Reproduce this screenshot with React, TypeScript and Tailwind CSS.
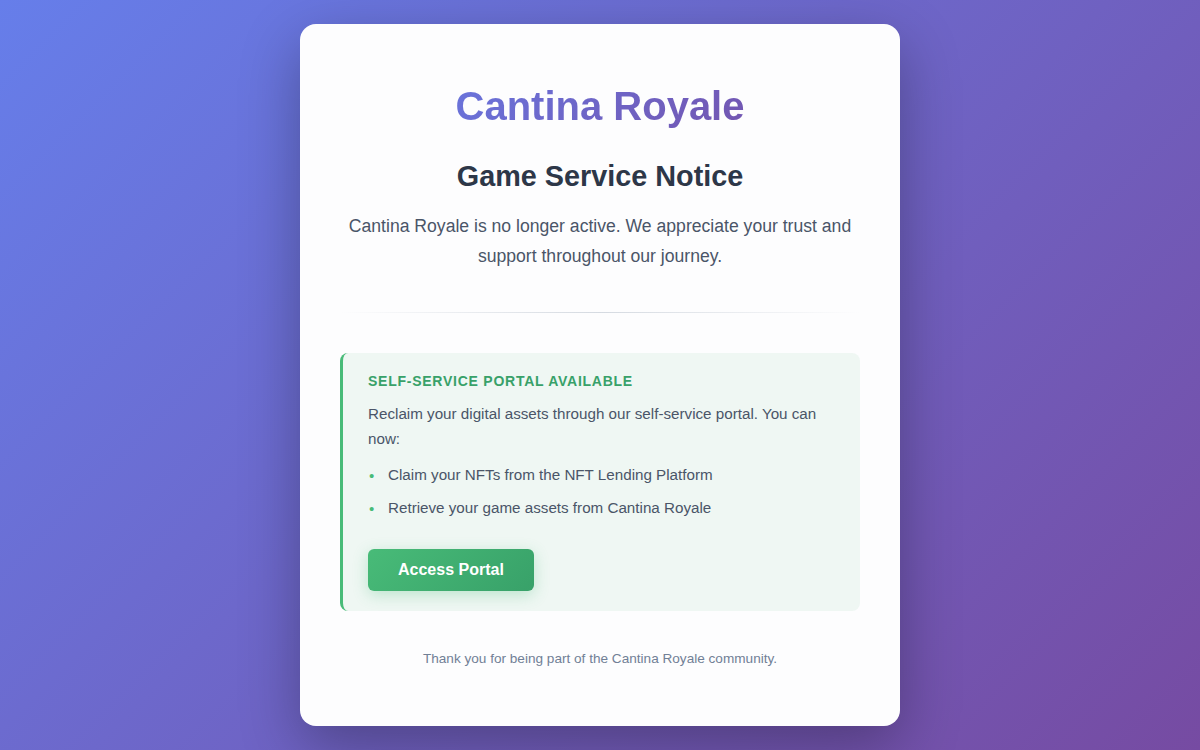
// Cantina Royale – service notice page
const FONT = { fontFamily: '"Liberation Sans", Arial, sans-serif' }

function Bullet({ children }: { children: React.ReactNode }) {
  return (
    <li className="flex items-center h-[33px]">
      <span className="w-[20px] text-[#48bb78] text-[15px] leading-none pl-[1px]">•</span>
      <span>{children}</span>
    </li>
  )
}

export default function App() {
  return (
    <div
      className="min-h-screen flex items-center justify-center bg-[linear-gradient(135deg,#667eea_0%,#764ba2_100%)] py-6"
      style={FONT}
    >
      <div className="w-[600px] bg-[#fdfdfe] rounded-2xl px-10 pt-[58px] pb-[57px] text-center shadow-[0_20px_60px_rgba(0,0,0,0.3)]">
        {/* Header */}
        <h1 className="text-[40px] leading-[48px] font-bold bg-[linear-gradient(135deg,#667eea_0%,#764ba2_100%)] bg-clip-text text-transparent">
          Cantina Royale
        </h1>
        <h2 className="mt-[29px] text-[28.8px] leading-[34px] font-bold text-[#2d3748]">Game Service Notice</h2>
        <p className="mt-[18px] text-[17.6px] leading-[30px] text-[#4a5568]">
          Cantina Royale is no longer active. We appreciate your trust and support throughout our journey.
        </p>

        <div className="mt-[41px] h-px bg-[linear-gradient(90deg,transparent,#d5dae1_50%,transparent)]" />

        {/* Self-service box */}
        <div className="mt-[40px] text-left bg-[#eff7f3] border-l-[3px] border-[#48bb78] rounded-lg pl-[25px] pr-6 pt-[18px] pb-[20px]">
          <h3 className="text-[14px] leading-[20px] font-bold uppercase tracking-[0.75px] text-[#38a169]">
            Self-Service Portal Available
          </h3>
          <p className="mt-[10px] text-[15.2px] leading-[25px] text-[#4a5568]">
            Reclaim your digital assets through our self-service portal. You can now:
          </p>
          <ul className="mt-[8px] text-[15.2px] text-[#4a5568]">
            <Bullet>Claim your NFTs from the NFT Lending Platform</Bullet>
            <Bullet>Retrieve your game assets from Cantina Royale</Bullet>
          </ul>
          <button className="mt-[24px] h-[42px] px-[30px] rounded-md bg-[linear-gradient(135deg,#48bb78_0%,#38a169_100%)] text-white text-[16px] font-bold shadow-[0_4px_15px_rgba(72,187,120,0.3)]">
            Access Portal
          </button>
        </div>

        <p className="mt-[38px] text-[13.6px] leading-[20px] text-[#718096]">
          Thank you for being part of the Cantina Royale community.
        </p>
      </div>
    </div>
  )
}
